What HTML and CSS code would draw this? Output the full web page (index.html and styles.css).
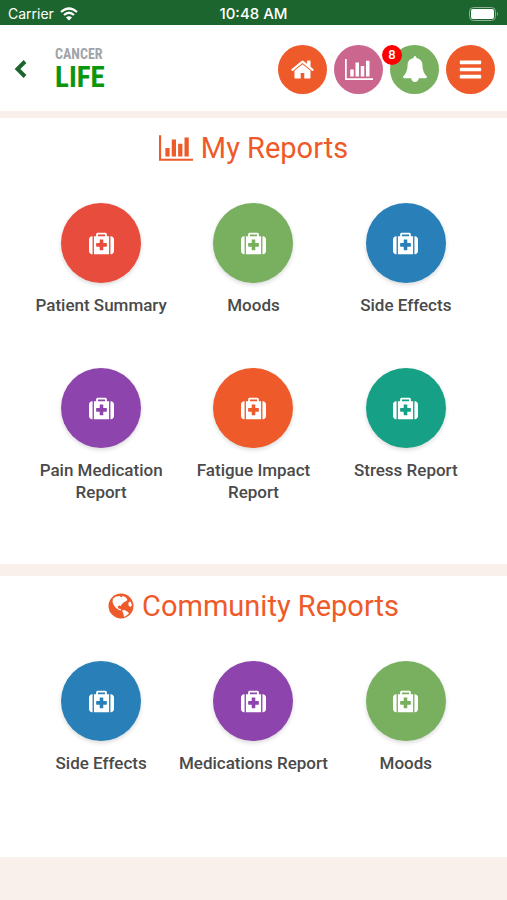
FILE: index.html
```html
<!DOCTYPE html>
<html lang="en">
<head>
	<meta charset="utf-8">
	<meta name="viewport" content="width=device-width, initial-scale=1">
	<title>My Reports</title>
	<link rel="stylesheet" href="styles.css">
</head>
<body>
	<!-- shared icons -->
	<svg class="sprite" aria-hidden="true">
		<symbol id="medkit" viewBox="0 0 1792 1792">
			<path d="M1280 1088v-192q0-14-9-23t-23-9h-224v-224q0-14-9-23t-23-9h-192q-14 0-23 9t-9 23v224h-224q-14 0-23 9t-9 23v192q0 14 9 23t23 9h224v224q0 14 9 23t23 9h192q14 0 23-9t9-23v-224h224q14 0 23-9t9-23zm-640-704h512v-128h-512v128zm-384 0v1280h-32q-92 0-158-66t-66-158v-832q0-92 66-158t158-66h32zm1184 0v1280h-1088v-1280h160v-160q0-40 28-68t68-28h576q40 0 68 28t28 68v160h160zm352 224v832q0 92-66 158t-158 66h-32v-1280h32q92 0 158 66t66 158z"/>
		</symbol>
		<symbol id="chart" viewBox="0 0 2048 1792">
			<path d="M640 896v512h-256v-512h256zm384-512v1024h-256v-1024h256zm1024 1152v128h-2048v-1536h128v1408h1920zm-640-896v768h-256v-768h256zm384-384v1152h-256v-1152h256z"/>
		</symbol>
	</svg>

	<div class="status">
		<div class="carrier">
			<span>Carrier</span>
			<svg width="18" height="14" viewBox="0 0 18 14" aria-hidden="true">
				<path d="M1 5Q9 -2 17 5M4 8Q9 3.500 14 8" fill="none" stroke="#fff" stroke-width="2.200"/>
				<path d="M6 10.500Q9 8 12 10.500L9 13.500z" fill="#fff"/>
			</svg>
		</div>
		<div class="time">10:48 AM</div>
		<div class="battery">
			<svg width="30" height="14" viewBox="0 0 30 14" aria-hidden="true">
				<rect x="0.500" y="0.500" width="26" height="13" rx="4" fill="none" stroke="#8fb197"/>
				<rect x="2" y="2" width="23" height="10" rx="2" fill="#fff"/>
				<path d="M28 5q2 2 0 4z" fill="#8fb197"/>
			</svg>
		</div>
	</div>

	<header class="header">
		<a class="back" href="#" aria-label="Back">
			<svg width="14" height="20" viewBox="0 0 14 20" aria-hidden="true">
				<path d="M11 2.500L3.500 10L11 17.500" fill="none" stroke="#1d652e" stroke-width="4"/>
			</svg>
		</a>
		<a class="logo" href="#">
			<span class="logo-top">CANCER</span>
			<span class="logo-bottom">LIFE</span>
		</a>
		<nav class="nav">
			<a class="nav-btn orange" href="#" aria-label="Home">
				<svg width="25" height="25" viewBox="0 0 1792 1792"><path d="M1472 992v480q0 26-19 45t-45 19h-384v-384h-256v384h-384q-26 0-45-19t-19-45v-480q0-1 .5-3t.5-3l575-474 575 474q1 2 1 6zm223-69l-62 74q-8 9-21 11h-3q-13 0-21-7l-692-577-692 577q-12 8-24 7-13-2-21-11l-62-74q-8-10-7-23.500t11-21.500l719-599q32-26 76-26t76 26l244 204v-195q0-14 9-23t23-9h192q14 0 23 9t9 23v408l219 182q10 8 11 21.500t-7 23.500z"/></svg>
			</a>
			<a class="nav-btn pink" href="#" aria-label="Reports">
				<svg width="28" height="25"><use href="#chart"/></svg>
			</a>
			<a class="nav-btn green" href="#" aria-label="Notifications">
				<svg width="26" height="26" viewBox="0 0 1792 1792"><path d="M1728 1408q0 52-38 90t-90 38h-448q0 106-75 181t-181 75-181-75-75-181h-448q-52 0-90-38t-38-90q50-42 91-88t85-119.500 74.500-158.500 50-206 19.500-260q0-152 117-282.500t307-158.500q-8-19-8-39 0-40 28-68t68-28 68 28 28 68q0 20-8 39 190 28 307 158.500t117 282.500q0 139 19.500 260t50 206 74.500 158.500 85 119.500 91 88z"/></svg>
				<span class="badge">8</span>
			</a>
			<button class="nav-btn orange" type="button" aria-label="Menu">
				<svg width="25" height="25" viewBox="0 0 1792 1792"><path d="M1664 1344v128q0 26-19 45t-45 19h-1408q-26 0-45-19t-19-45v-128q0-26 19-45t45-19h1408q26 0 45 19t19 45zm0-512v128q0 26-19 45t-45 19h-1408q-26 0-45-19t-19-45v-128q0-26 19-45t45-19h1408q26 0 45 19t19 45zm0-512v128q0 26-19 45t-45 19h-1408q-26 0-45-19t-19-45v-128q0-26 19-45t45-19h1408q26 0 45 19t19 45z"/></svg>
			</button>
		</nav>
	</header>

	<main>
		<section class="panel">
			<h1 class="title">
				<svg width="34" height="30" aria-hidden="true"><use href="#chart"/></svg>
				My Reports
			</h1>
			<div class="grid">
				<a class="item" href="#"><span class="circle red"><svg><use href="#medkit"/></svg></span>Patient Summary</a>
				<a class="item" href="#"><span class="circle green"><svg><use href="#medkit"/></svg></span>Moods</a>
				<a class="item" href="#"><span class="circle blue"><svg><use href="#medkit"/></svg></span>Side Effects</a>
				<a class="item" href="#"><span class="circle purple"><svg><use href="#medkit"/></svg></span>Pain Medication Report</a>
				<a class="item" href="#"><span class="circle orange"><svg><use href="#medkit"/></svg></span>Fatigue Impact Report</a>
				<a class="item" href="#"><span class="circle teal"><svg><use href="#medkit"/></svg></span>Stress Report</a>
			</div>
		</section>

		<section class="panel">
			<h2 class="title">
				<svg width="26" height="26" viewBox="0 0 26 26" aria-hidden="true">
					<circle cx="13" cy="13" r="12.500"/>
					<path d="M5 5.500L8 3.500L12 3L13 4.500L15 3L18 4.500L19.500 7L17.500 8.500L15.500 9.500L13.500 11.500L13 13L11.500 12.500L9.500 13.500L10.500 15.500L12.500 16L13.500 17.500L11 17L8 15L6 12.500L4.500 9z" class="cut"/>
					<path d="M14 17.500L16.500 17L20 19L21 20.500L18.500 22.500L16 24L15.500 21z" class="cut"/>
					<path d="M20.500 9.500L22.500 8.500L24 12L22.500 14L20.500 12.500z" class="cut"/>
				</svg>
				Community Reports
			</h2>
			<div class="grid">
				<a class="item" href="#"><span class="circle blue"><svg><use href="#medkit"/></svg></span>Side Effects</a>
				<a class="item" href="#"><span class="circle purple"><svg><use href="#medkit"/></svg></span>Medications Report</a>
				<a class="item" href="#"><span class="circle green"><svg><use href="#medkit"/></svg></span>Moods</a>
			</div>
		</section>
	</main>
</body>
</html>
```

FILE: styles.css
```css
*{
	box-sizing: border-box;
}
body{
	margin: 0;
	background-color: #f9f0ec;
	font-family: Roboto, "Liberation Sans", sans-serif;
	color: #4a4a4a;
}
a{
	color: inherit;
	text-decoration: none;
}
svg{
	display: block;
	fill: currentColor;
}
.sprite{
	position: absolute;
	width: 0;
	height: 0;
}

/* status bar */
.status{
	display: grid;
	grid-template-columns: 1fr auto 1fr;
	align-items: center;
	height: 25px;
	padding: 2px 8px 0;
	background-color: #1d652e;
	color: #fff;
	font-family: Inter, "Liberation Sans", sans-serif;
	font-size: 14px;
}
.carrier{
	display: flex;
	align-items: center;
	gap: 6px;
}
.time{
	font-size: 15px;
	font-weight: 500;
}
.battery{
	justify-self: end;
}

/* header */
.header{
	display: flex;
	align-items: center;
	height: 86px;
	padding: 2px 12px 0 14px;
	background-color: #fff;
}
.logo{
	display: flex;
	flex-direction: column;
	margin-left: 27px;
	font-family: "Roboto Condensed", "Liberation Sans Narrow", "Liberation Sans", sans-serif;
	font-weight: bold;
}
.logo-top{
	color: #a0a4a8;
	font-size: 14px;
	line-height: 16px;
}
.logo-bottom{
	color: #0c960c;
	font-size: 29px;
	line-height: 30px;
}
.nav{
	display: flex;
	gap: 7px;
	margin-left: auto;
}
.nav-btn{
	position: relative;
	display: flex;
	align-items: center;
	justify-content: center;
	width: 49px;
	height: 49px;
	padding: 0;
	border: none;
	border-radius: 50%;
	color: #fff;
	cursor: pointer;
}
.badge{
	position: absolute;
	top: 0;
	left: -8px;
	width: 20px;
	height: 20px;
	border-radius: 50%;
	background-color: #f00;
	font-size: 13px;
	font-weight: 500;
	line-height: 20px;
	text-align: center;
}

/* panels */
.panel{
	margin-top: 7px;
	padding: 10px 25px 61px;
	background-color: #fff;
}
.panel + .panel{
	margin-top: 12px;
}
.title{
	display: flex;
	align-items: center;
	justify-content: center;
	gap: 8px;
	margin: 0 0 35px;
	color: #ee5a29;
	font-size: 29px;
	font-weight: normal;
	line-height: 40px;
}
.cut{
	fill: #fff;
}
.grid{
	display: grid;
	grid-template-columns: repeat(3, 1fr);
	row-gap: 30px;
}
.item{
	display: flex;
	flex-direction: column;
	align-items: center;
	min-height: 135px;
	font-size: 17px;
	font-weight: 500;
	line-height: 22px;
	text-align: center;
}
.circle{
	display: flex;
	align-items: center;
	justify-content: center;
	width: 80px;
	height: 80px;
	margin-bottom: 11px;
	border-radius: 50%;
	box-shadow: 0 2px 4px rgba(0, 0, 0, .15);
	color: #fff;
}
.circle svg{
	width: 25px;
	height: 25px;
}

.orange{
	background-color: #ee5a29;
}
.pink{
	background-color: #cb668e;
}
.green{
	background-color: #79b05f;
}
.red{
	background-color: #e84c3d;
}
.blue{
	background-color: #2980b9;
}
.purple{
	background-color: #8e44ad;
}
.teal{
	background-color: #16a085;
}
```
